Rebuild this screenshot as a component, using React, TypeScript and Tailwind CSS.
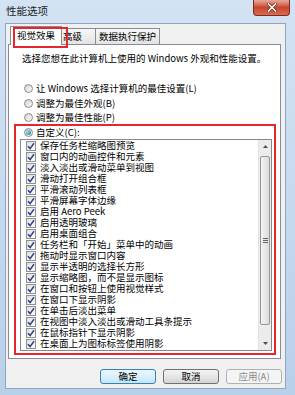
import React from 'react';

const effects = [
  '保存任务栏缩略图预览',
  '窗口内的动画控件和元素',
  '淡入淡出或滑动菜单到视图',
  '滑动打开组合框',
  '平滑滚动列表框',
  '平滑屏幕字体边缘',
  '启用 Aero Peek',
  '启用透明玻璃',
  '启用桌面组合',
  '任务栏和「开始」菜单中的动画',
  '拖动时显示窗口内容',
  '显示半透明的选择长方形',
  '显示缩略图，而不是显示图标',
  '在窗口和按钮上使用视觉样式',
  '在窗口下显示阴影',
  '在单击后淡出菜单',
  '在视图中淡入淡出或滑动工具条提示',
  '在鼠标指针下显示阴影',
  '在桌面上为图标标签使用阴影',
];

const Radio: React.FC<{ checked?: boolean }> = ({ checked }) => (
  <span className="w-[9px] h-[9px] rounded-full border border-[#8a8a8a] bg-gradient-to-br from-[#d4d4d4] to-[#fafafa] flex items-center justify-center shrink-0">
    {checked && <span className="w-[5px] h-[5px] rounded-full bg-[radial-gradient(circle_at_35%_35%,#8ce6f7,#1a6a91)]" />}
  </span>
);

const Check: React.FC = () => (
  <span className="w-[10px] h-[10px] border border-[#8e8f8f] bg-gradient-to-br from-[#dedede] to-white flex items-center justify-center shrink-0">
    <svg width="8" height="8" viewBox="0 0 8 8">
      <path d="M1 4.2 L3.1 6.6 L7 1.2" stroke="#2c3f86" strokeWidth="1.5" fill="none" />
    </svg>
  </span>
);

const Button: React.FC<{ label: string; primary?: boolean; disabled?: boolean }> = ({ label, primary, disabled }) => {
  let cls = 'border-[#707070] bg-gradient-to-b from-[#f3f3f3] via-[#e6e6e6] to-[#d3d3d3] text-black';
  if (primary) cls = 'border-[#3c7fb1] bg-gradient-to-b from-[#eaf6fd] via-[#d9f0fc] to-[#bee6fd] text-black';
  if (disabled) cls = 'border-[#adb2b5] bg-[#f4f4f4] text-[#8a8a8a]';
  return (
    <div className={`w-[56px] h-[15px] rounded-[3px] border flex items-center justify-center text-[9.5px] leading-[11px] ${cls}`}>
      {label}
    </div>
  );
};

export default function App() {
  return (
    <div
      className="w-[295px] h-[395px] flex flex-col bg-gradient-to-b from-[#d3e3f4] to-[#b9d0e9] text-black overflow-hidden"
      style={{ fontFamily: '"Noto Sans CJK SC", "Noto Sans", sans-serif' }}
    >
      {/* title bar */}
      <div className="h-[23px] flex items-start shrink-0">
        <span className="ml-[6px] mt-[5px] text-[10.5px] leading-[12px] text-[#1b1b1b]">性能选项</span>
        <div className="ml-auto mr-[5px] w-[37px] h-[16px] rounded-b-[4px] border border-t-0 border-[#7c2b1f] bg-gradient-to-b from-[#e6a898] via-[#c7452f] to-[#d96a52] flex items-center justify-center">
          <svg width="10" height="9" viewBox="0 0 10 9">
            <path d="M1.5 1 L8.5 8 M8.5 1 L1.5 8" stroke="#5a1a10" strokeWidth="3" strokeLinecap="square" />
            <path d="M1.5 1 L8.5 8 M8.5 1 L1.5 8" stroke="#ffffff" strokeWidth="1.7" strokeLinecap="square" />
          </svg>
        </div>
      </div>

      {/* client area */}
      <div className="ml-[5px] w-[281px] h-[366px] bg-[#f0f0f0] border border-[#8da6c2] flex flex-col">
        {/* tabs */}
        <div className="relative z-10 mt-[2px] ml-[4px] h-[18px] flex items-end text-[9.5px] leading-[11px]">
          <div className="w-[52px] h-[19px] -mb-[1px] bg-white border border-b-0 border-[#898c95] flex items-center pl-[6px] pb-[1px]">视觉效果</div>
          <div className="w-[34px] h-[16px] bg-gradient-to-b from-[#f6f6f6] to-[#e3e3e3] border border-l-0 border-b-0 border-[#898c95] flex items-center pl-[1px]">高级</div>
          <div className="w-[64px] h-[16px] bg-gradient-to-b from-[#f6f6f6] to-[#e3e3e3] border border-l-0 border-b-0 border-[#898c95] flex items-center justify-center">数据执行保护</div>
          <div className="absolute left-[3px] top-[1px] w-[55px] h-[21px] border-2 border-[#e5262c]" />
        </div>

        {/* panel */}
        <div className="ml-[2px] w-[273px] h-[315px] bg-white border border-[#898c95] flex flex-col text-[9.5px] leading-[11px]">
          <div className="mt-[8px] pl-[13px] h-[11px] whitespace-nowrap">选择您想在此计算机上使用的 Windows 外观和性能设置。</div>

          <div className="mt-[17px] h-[15px] flex items-center gap-[3px] pl-[15px]">
            <Radio />
            <span>让 Windows 选择计算机的最佳设置(L)</span>
          </div>
          <div className="h-[14px] flex items-center gap-[3px] pl-[15px]">
            <Radio />
            <span>调整为最佳外观(B)</span>
          </div>
          <div className="h-[14px] flex items-center gap-[3px] pl-[15px]">
            <Radio />
            <span>调整为最佳性能(P)</span>
          </div>

          <div className="ml-[5px] w-[262px] h-[231px] border-2 border-[#e5262c] flex flex-col">
            <div className="h-[12px] flex items-center gap-[3px] pl-[8px]">
              <Radio checked />
              <span>自定义(C):</span>
            </div>
            <div className="mt-[1px] ml-[4px] w-[252px] h-[212px] border border-[#828790] flex">
              <div className="flex-1 overflow-hidden">
                {effects.map((t) => (
                  <div key={t} className="h-[11px] flex items-center gap-[4px] pl-[5px] whitespace-nowrap">
                    <Check />
                    <span className="leading-[11px]">{t}</span>
                  </div>
                ))}
              </div>
              {/* scrollbar */}
              <div className="w-[13px] flex flex-col bg-[#ececec] border-l border-[#e2e2e2]">
                <div className="h-[13px] flex items-center justify-center">
                  <svg width="5" height="3" viewBox="0 0 5 3"><path d="M0 3 L2.5 0 L5 3 Z" fill="#4d4d4d" /></svg>
                </div>
                <div className="mt-[3px] mx-[1px] h-[169px] rounded-[2px] border border-[#979797] bg-gradient-to-r from-[#f4f4f4] to-[#dcdcdc] flex flex-col items-center justify-center gap-[1px]">
                  <span className="w-[5px] h-px bg-[#666]" />
                  <span className="w-[5px] h-px bg-[#666]" />
                  <span className="w-[5px] h-px bg-[#666]" />
                </div>
                <div className="flex-1" />
                <div className="h-[13px] flex items-center justify-center">
                  <svg width="5" height="3" viewBox="0 0 5 3"><path d="M0 0 L2.5 3 L5 0 Z" fill="#4d4d4d" /></svg>
                </div>
              </div>
            </div>
          </div>
        </div>

        {/* buttons */}
        <div className="mt-[10px] mr-[3px] flex justify-end gap-[7px]">
          <Button label="确定" primary />
          <Button label="取消" />
          <Button label="应用(A)" disabled />
        </div>
      </div>
    </div>
  );
}
